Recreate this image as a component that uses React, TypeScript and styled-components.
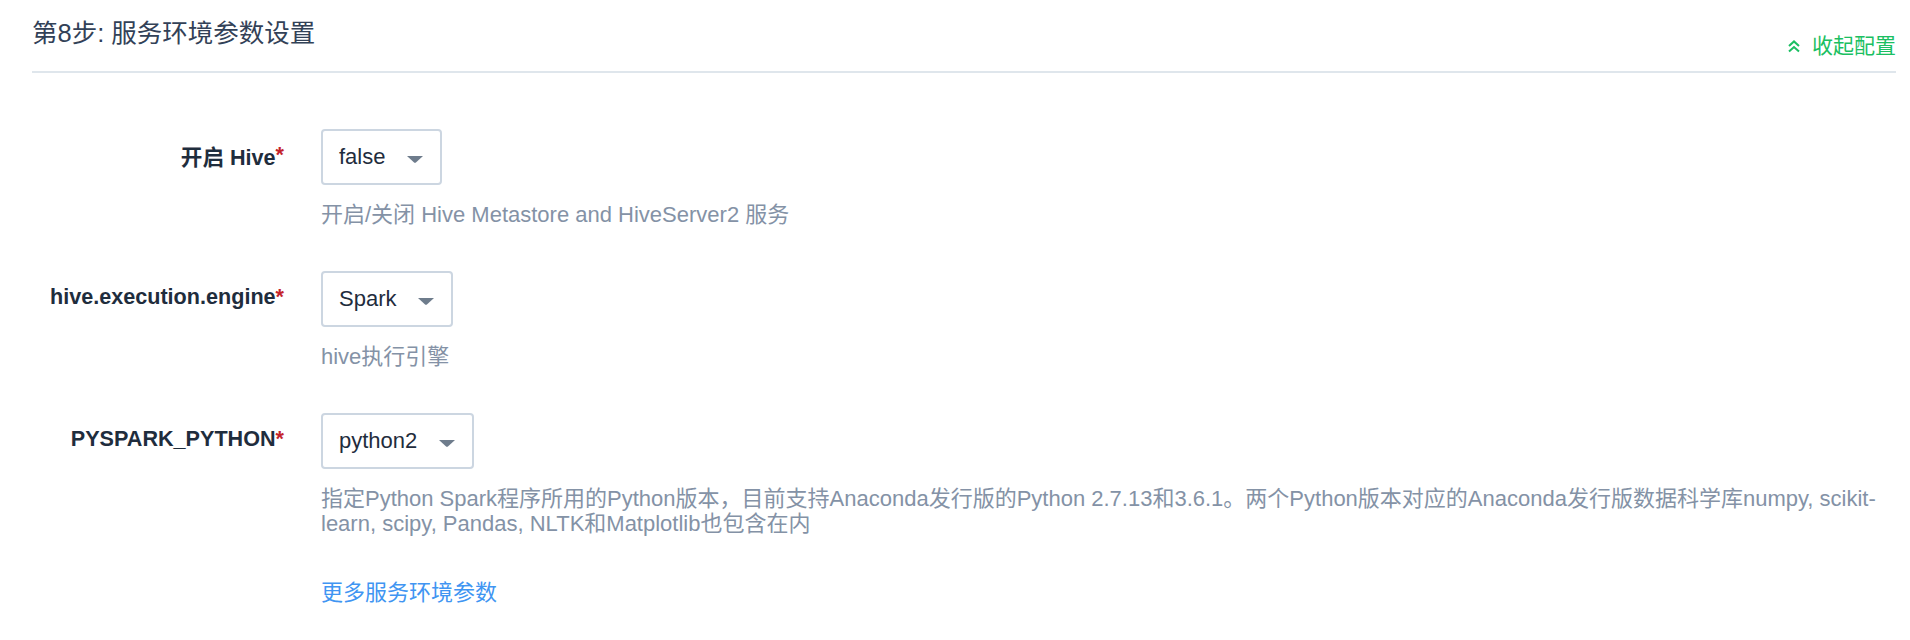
import React from "react";
import styled, { createGlobalStyle } from "styled-components";

const GlobalStyle = createGlobalStyle`
  html, body {
    margin: 0;
    padding: 0;
    background: #ffffff;
  }
  body {
    font-family: "Liberation Sans", "Noto Sans CJK SC", sans-serif;
    color: #1f2d3d;
  }
`;

const Section = styled.section`
  padding: 16px 14px 0 32px;
`;

const Header = styled.header`
  display: flex;
  justify-content: space-between;
  align-items: flex-start;
  padding-bottom: 11px;
  border-bottom: 2px solid #dfe6ec;
`;

const Title = styled.h2`
  margin: 0;
  font-size: 25.5px;
  line-height: 34px;
  font-weight: 400;
  color: #324157;
`;

const Collapse = styled.a`
  display: flex;
  align-items: center;
  gap: 12px;
  margin-top: 16px;
  font-size: 21px;
  line-height: 28px;
  color: #1bbf62;
  cursor: pointer;
  text-decoration: none;
`;

const Form = styled.div`
  display: grid;
  grid-template-columns: 252px 1fr;
  column-gap: 37px;
  row-gap: 44px;
  align-items: start;
  padding-top: 56px;
`;

const Label = styled.label`
  display: flex;
  justify-content: flex-end;
  align-items: center;
  height: 56px;
  padding-bottom: 4px;
  box-sizing: border-box;
  font-size: 21.6px;
  font-weight: 700;
  color: #1f2d3d;
  white-space: nowrap;
`;

const Required = styled.span`
  color: #c4232b;
`;

const Control = styled.div`
  display: flex;
  flex-direction: column;
  align-items: flex-start;
`;

const Select = styled.div`
  display: inline-flex;
  align-items: center;
  gap: 22px;
  height: 56px;
  box-sizing: border-box;
  padding: 0 17px 0 16px;
  border: 2px solid #ccd6e1;
  border-radius: 4px;
  background: #fff;
  font-size: 22px;
  color: #1f2d3d;
  cursor: pointer;
`;

const Caret = styled.svg`
  display: block;
  margin-top: 5px;
`;

const Help = styled.p`
  margin: 17px 0 0;
  font-size: 22px;
  line-height: 25px;
  color: #8492a6;
`;

const MoreLink = styled.a`
  font-size: 22px;
  line-height: 25px;
  color: #4095f2;
  text-decoration: none;
  cursor: pointer;
`;

const ChevronsUp = () => (
  <svg width="12" height="13" viewBox="0 0 12 13" fill="none">
    <path d="M1 6 L6 1.4 L11 6" stroke="#1bbf62" strokeWidth="2" />
    <path d="M1 11.6 L6 7 L11 11.6" stroke="#1bbf62" strokeWidth="2" />
  </svg>
);

const DropCaret = () => (
  <Caret width="16" height="7" viewBox="0 0 16 7">
    <path d="M0 0 H16 L9.2 6.2 Q8 7.2 6.8 6.2 Z" fill="#6e7c8c" />
  </Caret>
);

type FieldProps = {
  label: string;
  value: string;
  help: string;
};

const Field = ({ label, value, help }: FieldProps) => (
  <>
    <Label>
      {label}
      <Required>*</Required>
    </Label>
    <Control>
      <Select>
        <span>{value}</span>
        <DropCaret />
      </Select>
      <Help>{help}</Help>
    </Control>
  </>
);

const fields: FieldProps[] = [
  {
    label: "开启 Hive",
    value: "false",
    help: "开启/关闭 Hive Metastore and HiveServer2 服务",
  },
  {
    label: "hive.execution.engine",
    value: "Spark",
    help: "hive执行引擎",
  },
  {
    label: "PYSPARK_PYTHON",
    value: "python2",
    help:
      "指定Python Spark程序所用的Python版本，目前支持Anaconda发行版的Python 2.7.13和3.6.1。两个Python版本对应的Anaconda发行版数据科学库numpy, scikit-learn, scipy, Pandas, NLTK和Matplotlib也包含在内",
  },
];

export default function App() {
  return (
    <>
      <GlobalStyle />
      <Section>
        <Header>
          <Title>第8步: 服务环境参数设置</Title>
          <Collapse>
            <ChevronsUp />
            收起配置
          </Collapse>
        </Header>
        <Form>
          {fields.map((f) => (
            <Field key={f.label} {...f} />
          ))}
          <span />
          <Control>
            <MoreLink>更多服务环境参数</MoreLink>
          </Control>
        </Form>
      </Section>
    </>
  );
}
